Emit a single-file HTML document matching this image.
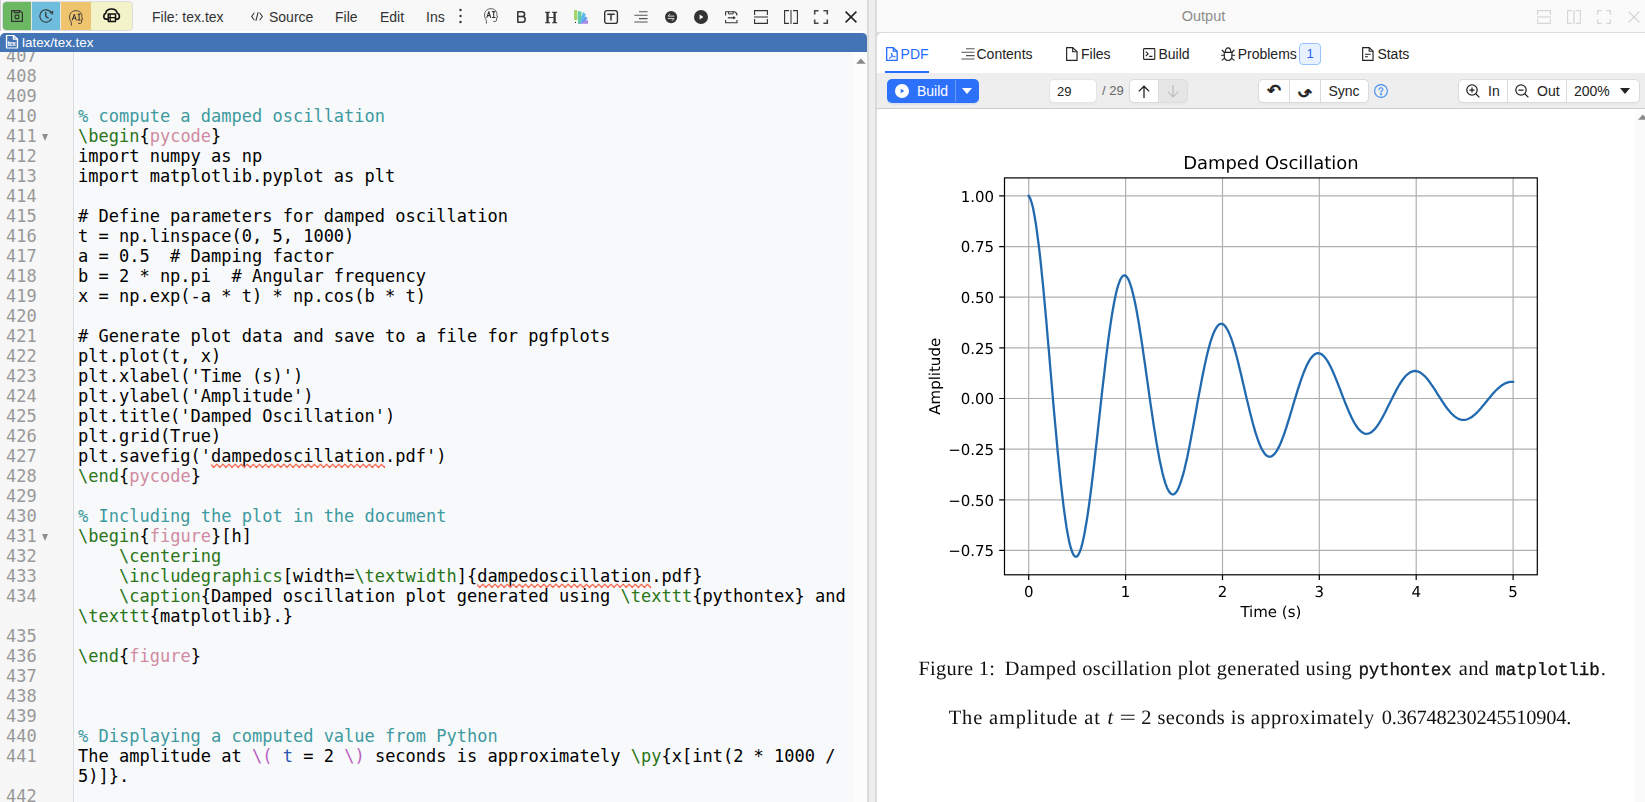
<!DOCTYPE html>
<html lang="en">
<head>
<meta charset="utf-8">
<title>tex.tex</title>
<style>
*{box-sizing:border-box}
html,body{margin:0;padding:0}
body{width:1645px;height:802px;overflow:hidden;background:#fff;position:relative;
  font-family:"Liberation Sans",Arial,sans-serif;font-size:14px;color:#333}
.abs{position:absolute}
svg{display:block;overflow:visible}
/* ---------- left pane ---------- */
#left{position:absolute;left:0;top:0;width:868px;height:802px;background:#fff;overflow:hidden}
#ltb{position:absolute;left:0;top:0;width:868px;height:31px;background:#f8f8f8}
#btns{position:absolute;left:3px;top:2px;box-shadow:0 0 0 1px #dcdce2;width:129px;height:28px;border-radius:3.5px;overflow:hidden;background:#e6e6e6}
#btns div{position:absolute;top:0;height:28px}
.tbt{position:absolute;top:0;height:33px;line-height:34px;font-size:14px;color:#333;white-space:nowrap}
.ico{position:absolute}
#titlebar{position:absolute;left:0;top:33px;width:867px;height:19px;background:#4274b6;border-top-left-radius:5px;border-top-right-radius:4.5px;color:#fff;font-size:13.4px;line-height:19px}
#ed{position:absolute;left:0;top:52px;width:868px;height:750px;background:#f8f9fa;overflow:hidden}
#ed:before{content:"";position:absolute;left:0;top:0;width:73px;height:750px;background:#f7f7f7;border-right:1px solid #ddd}
#ed:after{content:"";position:absolute;left:853px;top:0;width:15px;height:750px;background:#fcfcfc}
#lines{position:absolute;left:0;top:-6px;width:850px}
.ln{position:relative;min-height:20px}
.ln pre,.no{font-family:"DejaVu Sans Mono","Liberation Mono",monospace;font-size:17px;line-height:20px}
.ln pre{margin:0;padding:0 0 0 78px;color:#000;white-space:pre}
.no{position:absolute;left:6px;top:0;color:#999}
.fold{position:absolute;left:42px;top:7.5px;width:0;height:0;border-left:3.5px solid transparent;border-right:3.5px solid transparent;border-top:7px solid #8f8f8f}
.c{color:#3d9aa0}.t{color:#2a7519}.a{color:#d08ba2}.k{color:#bb5fc4}.v{color:#2a55b0}
.sp{position:relative}
.sp svg{position:absolute;left:0;top:16.6px;width:100%;height:6px;overflow:hidden}
/* ---------- divider ---------- */
#div{position:absolute;left:867px;top:0;width:10px;height:802px;background:linear-gradient(to right,rgba(220,220,220,0) 0,rgba(220,220,220,0) 0.5px,#dbdbdb 0.5px,#dbdbdb 1.7px,#eee 1.7px,#eee 8.2px,#dbdbdb 8.2px,#dbdbdb 9.8px,rgba(220,220,220,0) 9.8px)}
/* ---------- right pane ---------- */
#right{position:absolute;left:876px;top:0;width:769px;height:802px;background:#fff;overflow:hidden}
#rhead{position:absolute;left:0;top:0;width:769px;height:33px;background:#fafafa;border-bottom:1.5px solid #ddd}
#tabs{position:absolute;left:1px;top:33px;width:768px;height:40px;background:#fff;border-top-left-radius:5px}
.tab{position:absolute;top:0;height:40px;line-height:42px;font-size:14px;color:#222;white-space:nowrap}
#ptb{position:absolute;left:1px;top:73px;width:768px;height:36px;background:#eee;border-bottom:1px solid #ccc}
.btn{position:absolute;top:6px;height:24px;background:#fff;border:1px solid #dadada;box-shadow:0 2px 0 rgba(0,0,0,0.02);font-size:14px;line-height:22px;color:#222;white-space:nowrap}
#pdf{position:absolute;left:1px;top:109px;width:768px;height:693px;background:#fff}
</style>
</head>
<body>
<svg width="0" height="0" style="position:absolute"><defs><pattern id="zz" x="-0.3" y="0" width="6.1" height="6" patternUnits="userSpaceOnUse"><path d="M-3.05 4.5L0 1.1L3.05 4.5L6.1 1.1L9.15 4.5" stroke="#f5583c" stroke-width="1.25" stroke-opacity="0.92" fill="none" stroke-linejoin="round"/></pattern></defs></svg>
<div id="left">
<div id="ltb">
  <div class="abs" style="left:0;top:0;width:1px;height:31px;background:#cfcfcf"></div>
  <div id="btns">
    <div style="left:0;width:28px;background:#6bb762"></div>
    <div style="left:29px;width:28px;background:#6ebddd"></div>
    <div style="left:58px;width:30px;background:#f0c36d"></div>
    <div style="left:88px;width:41px;background:#f3f3c9"></div>
  </div>
  <!-- save -->
  <svg class="ico" style="left:11px;top:10px" width="12" height="12" viewBox="0 0 12 12" fill="none" stroke="#333" stroke-width="1.2" stroke-linejoin="round"><path d="M0.6 0.6H8.8L11.4 3V11.4H0.6Z"/><path d="M3.2 0.6V2.7H8.4V0.6"/><rect x="4.2" y="5.1" width="3.6" height="3.6" rx="0.6"/></svg>
  <!-- time travel -->
  <svg class="ico" style="left:39px;top:9px" width="14" height="14" viewBox="0 0 14 14" fill="none" stroke="#333" stroke-width="1.1" stroke-linecap="round" stroke-linejoin="round"><path d="M12.47 9.91A6.2 6.2 0 1 1 12.2 3.6"/><path d="M13.7 5.1L13.9 2.1L11 3.5Z" fill="#333" stroke-width="0.5"/><path d="M6.8 3.4V7.5L9.2 9" stroke-width="1.3"/></svg>
  <!-- AI head -->
  <svg class="ico" style="left:69px;top:10px" width="14" height="16" viewBox="0 0 14 16" fill="none" stroke="#333" stroke-width="0.9" stroke-linecap="round" stroke-linejoin="round"><path d="M2.4 15.2C2.6 13 2.3 12 1.4 10.6C-0.2 7.6 0.4 3.4 3.4 1.6C6.4 -0.1 10.6 0.6 12.2 3.4C13 4.8 13 6.2 12.8 7.2L13.6 9.4L12.6 9.8V12C12.6 13 12 13.4 11 13.4H9.6"/><path d="M3.4 10L5.3 4.2L7.2 10M4 8.2H6.6" stroke-width="1"/><path d="M9 4.2H11.2M10.1 4.2V10M9 10H11.2" stroke-width="1"/></svg>
  <!-- cloud table -->
  <svg class="ico" style="left:103px;top:7.6px" width="17.5" height="14.6" viewBox="0 0 17.5 14.6" fill="none" stroke="#111" stroke-width="1.6" stroke-linejoin="round"><path d="M4.9 11.1H3.1C1.5 11.1 0.8 9.7 0.8 8.2C0.8 6.8 1.5 5.7 2.7 5.4C3.1 2.7 5.6 1 8.6 1C11.6 1 13.8 2.7 14.2 5.2C15.5 5.5 16.4 6.7 16.4 8.2C16.4 9.7 15.6 11.1 14.1 11.1H12.7"/><rect x="5.3" y="5.9" width="7.2" height="7.5" stroke-width="1.5"/><path d="M5.3 9.6H12.5M7.2 5.9V13.4" stroke-width="1.2"/></svg>

  <div class="tbt" style="left:152px">File: tex.tex</div>
  <svg class="ico" style="left:251px;top:12px" width="12" height="9" viewBox="0 0 12 9" fill="none" stroke="#333" stroke-width="1.1" stroke-linecap="round" stroke-linejoin="round"><path d="M3 1.2L0.6 4.5L3 7.8M9 1.2L11.4 4.5L9 7.8M7 0.6L5 8.4"/></svg>
  <div class="tbt" style="left:269px">Source</div>
  <div class="tbt" style="left:335px">File</div>
  <div class="tbt" style="left:380px">Edit</div>
  <div class="tbt" style="left:426px;width:19px;overflow:hidden">Ins</div>
  <svg class="ico" style="left:459px;top:8px" width="3" height="16" viewBox="0 0 3 16" fill="#333"><circle cx="1.5" cy="2" r="1.2"/><circle cx="1.5" cy="8" r="1.2"/><circle cx="1.5" cy="14" r="1.2"/></svg>
  <!-- AI head 2 -->
  <svg class="ico" style="left:484px;top:8px" width="14" height="16" viewBox="0 0 14 16" fill="none" stroke="#333" stroke-width="0.8" stroke-linecap="round" stroke-linejoin="round"><path d="M2.4 15.2C2.6 13 2.3 12 1.4 10.6C-0.2 7.6 0.4 3.4 3.4 1.6C6.4 -0.1 10.6 0.6 12.2 3.4C13 4.8 13 6.2 12.8 7.2L13.6 9.4L12.6 9.8V12C12.6 13 12 13.4 11 13.4H9.6"/><path d="M2.9 9.4L4.8 3.6L6.7 9.4M3.5 7.6H6.1" stroke-width="1.05"/><path d="M8.3 3.6H11.1M9.7 3.6V9.4M8.3 9.4H11.1" stroke-width="1.05"/></svg>
  <!-- bold -->
  <svg class="ico" style="left:517px;top:11px" width="9" height="12" viewBox="0 0 9 12" fill="none" stroke="#333" stroke-width="1.5" stroke-linejoin="round"><path d="M0.8 0.8H4.8C6.6 0.8 7.6 1.8 7.6 3.2C7.6 4.6 6.6 5.6 4.8 5.6H0.8ZM0.8 5.6H5.2C7.2 5.6 8.2 6.8 8.2 8.4C8.2 10 7.2 11.2 5.2 11.2H0.8Z"/></svg>
  <!-- header H -->
  <div class="ico" style="left:543px;top:6.5px;width:16px;height:20px;font:17.6px/20px 'Liberation Serif',serif;color:#333;text-align:center;-webkit-text-stroke:0.45px #333;will-change:transform">H</div>
  <!-- colors fan -->
  <svg class="ico" style="left:574px;top:10px" width="14" height="14" viewBox="0 0 14 14"><path d="M4 10.15H14V13.8H4Z" fill="#a98ae8"/><path d="M11.4 6.2L13.7 8.6L7 13.6L4 13Z" fill="#6598ec"/><path d="M9.3 2L11.9 4.4L7 13.4L4 13Z" fill="#5dbbe9"/><path d="M3.9 1L7.7 1.8L6.4 13.2L3.6 13.4Z" fill="#62cba1"/><path d="M0 0H3.25V10.1H0Z" fill="#a5d46a"/><path d="M0 10.1H3.6V13.8H0Z" fill="#fdfdfd"/><circle cx="1.5" cy="12.4" r="0.55" fill="#222"/></svg>
  <!-- text box -->
  <svg class="ico" style="left:604px;top:10px" width="14" height="14" viewBox="0 0 14 14" fill="none" stroke="#333" stroke-width="1.2"><rect x="0.7" y="0.6" width="12.7" height="12.8" rx="2.2" stroke-width="1.4"/><path d="M3.3 4.3H10.7M7 4.3V10.4" stroke-width="1.5"/></svg>
  <!-- align -->
  <svg class="ico" style="left:634px;top:11px" width="14" height="12" viewBox="0 0 14 12" stroke="#555" stroke-width="1.1"><path d="M5 0.8H13.6M0.4 4.2H13.6M5 7.6H13.6M0.4 11H13.6"/></svg>
  <!-- swap circle -->
  <svg class="ico" style="left:665px;top:10.8px" width="12.2" height="12.2" viewBox="0 0 14 14"><circle cx="7" cy="7" r="7" fill="#333"/><path d="M10.8 5.9H3.6L6 3.3M3.2 8.7H10.4L8 11.3" fill="none" stroke="#e4e4e4" stroke-width="1.05" stroke-linejoin="round"/></svg>
  <!-- play circle -->
  <svg class="ico" style="left:694px;top:10px" width="14" height="14" viewBox="0 0 14 14"><circle cx="7" cy="7" r="7" fill="#333"/><path d="M5.6 4.6L9.4 7L5.6 9.4Z" fill="#fff"/></svg>
  <!-- save-arrow -->
  <svg class="ico" style="left:724.6px;top:10.6px" width="12.6" height="12.4" viewBox="0 0 12.6 12.4" fill="none" stroke="#333" stroke-width="1.1" stroke-linejoin="round"><path d="M0.6 4.4V0.7H9.2C10.8 1 11.9 2.4 12 4.4M0.6 9V11.7H12V9"/><path d="M3.6 0.7V2.9H8.2V0.7" stroke-width="1"/><path d="M2.8 6.8H9.4" stroke-width="1.2"/><path d="M8.2 5L10.8 6.8L8.2 8.6Z" fill="#333" stroke="none"/></svg>
  <!-- split horizontal -->
  <svg class="ico" style="left:754px;top:10px" width="14" height="14" viewBox="0 0 14 14" fill="none" stroke="#333" stroke-width="1.1"><path d="M0.6 5V0.6H13.4V5M0.6 9V13.4H13.4V9"/><path d="M0 7H14" stroke="#777" stroke-width="1.6"/></svg>
  <!-- split vertical -->
  <svg class="ico" style="left:784px;top:10px" width="14" height="14" viewBox="0 0 14 14" fill="none" stroke="#333" stroke-width="1.1"><path d="M5 0.6H0.6V13.4H5M9 0.6H13.4V13.4H9"/><path d="M7 0V14" stroke="#777" stroke-width="1.6"/></svg>
  <!-- fullscreen -->
  <svg class="ico" style="left:814px;top:10px" width="14" height="14" viewBox="0 0 14 14" fill="none" stroke="#484848" stroke-width="1.6"><path d="M0.7 4.6V0.7H4.6M9.4 0.7H13.3V4.6M13.3 9.4V13.3H9.4M4.6 13.3H0.7V9.4"/></svg>
  <!-- close -->
  <svg class="ico" style="left:845px;top:11px" width="12" height="12" viewBox="0 0 12 12" fill="none" stroke="#222" stroke-width="1.5"><path d="M0.6 0.6L11.4 11.4M11.4 0.6L0.6 11.4"/></svg>
</div>
<div id="titlebar">
  <svg class="ico" style="left:6px;top:2px" width="12" height="13.5" viewBox="0 0 11 14" preserveAspectRatio="none" fill="none" stroke="#fff" stroke-width="1.25" stroke-linejoin="round"><path d="M0.5 0.5H6.8L10.5 4.2V13.5H0.5Z"/><path d="M6.8 0.5V4.2H10.5"/></svg>
  <div class="abs" style="left:7.6px;top:7.4px;font:bold 6.5px/7px 'Liberation Sans',sans-serif;color:#fff;letter-spacing:-0.5px">tex</div>
  <div class="abs" style="left:22px;top:0">latex/tex.tex</div>
</div>
<div id="ed"><div id="lines">
<div class="ln"><span class="no">407</span><pre> </pre></div>
<div class="ln"><span class="no">408</span><pre> </pre></div>
<div class="ln"><span class="no">409</span><pre> </pre></div>
<div class="ln"><span class="no">410</span><pre><span class="c">% compute a damped oscillation</span></pre></div>
<div class="ln"><span class="no">411</span><i class="fold"></i><pre><span class="t">\begin</span>{<span class="a">pycode</span>}</pre></div>
<div class="ln"><span class="no">412</span><pre>import numpy as np</pre></div>
<div class="ln"><span class="no">413</span><pre>import matplotlib.pyplot as plt</pre></div>
<div class="ln"><span class="no">414</span><pre> </pre></div>
<div class="ln"><span class="no">415</span><pre># Define parameters for damped oscillation</pre></div>
<div class="ln"><span class="no">416</span><pre>t = np.linspace(0, 5, 1000)</pre></div>
<div class="ln"><span class="no">417</span><pre>a = 0.5  # Damping factor</pre></div>
<div class="ln"><span class="no">418</span><pre>b = 2 * np.pi  # Angular frequency</pre></div>
<div class="ln"><span class="no">419</span><pre>x = np.exp(-a * t) * np.cos(b * t)</pre></div>
<div class="ln"><span class="no">420</span><pre> </pre></div>
<div class="ln"><span class="no">421</span><pre># Generate plot data and save to a file for pgfplots</pre></div>
<div class="ln"><span class="no">422</span><pre>plt.plot(t, x)</pre></div>
<div class="ln"><span class="no">423</span><pre>plt.xlabel('Time (s)')</pre></div>
<div class="ln"><span class="no">424</span><pre>plt.ylabel('Amplitude')</pre></div>
<div class="ln"><span class="no">425</span><pre>plt.title('Damped Oscillation')</pre></div>
<div class="ln"><span class="no">426</span><pre>plt.grid(True)</pre></div>
<div class="ln"><span class="no">427</span><pre>plt.savefig('<span class="sp">dampedoscillation<svg><rect width="100%" height="6" fill="url(#zz)"/></svg></span>.pdf')</pre></div>
<div class="ln"><span class="no">428</span><pre><span class="t">\end</span>{<span class="a">pycode</span>}</pre></div>
<div class="ln"><span class="no">429</span><pre> </pre></div>
<div class="ln"><span class="no">430</span><pre><span class="c">% Including the plot in the document</span></pre></div>
<div class="ln"><span class="no">431</span><i class="fold"></i><pre><span class="t">\begin</span>{<span class="a">figure</span>}[h]</pre></div>
<div class="ln"><span class="no">432</span><pre>    <span class="t">\centering</span></pre></div>
<div class="ln"><span class="no">433</span><pre>    <span class="t">\includegraphics</span>[width=<span class="t">\textwidth</span>]{<span class="sp">dampedoscillation<svg><rect width="100%" height="6" fill="url(#zz)"/></svg></span>.pdf}</pre></div>
<div class="ln"><span class="no">434</span><pre>    <span class="t">\caption</span>{Damped oscillation plot generated using <span class="t">\texttt</span>{pythontex} and<br><span class="t">\texttt</span>{matplotlib}.}</pre></div>
<div class="ln"><span class="no">435</span><pre> </pre></div>
<div class="ln"><span class="no">436</span><pre><span class="t">\end</span>{<span class="a">figure</span>}</pre></div>
<div class="ln"><span class="no">437</span><pre> </pre></div>
<div class="ln"><span class="no">438</span><pre> </pre></div>
<div class="ln"><span class="no">439</span><pre> </pre></div>
<div class="ln"><span class="no">440</span><pre><span class="c">% Displaying a computed value from Python</span></pre></div>
<div class="ln"><span class="no">441</span><pre>The amplitude at <span class="k">\(</span> <span class="v">t</span> = 2 <span class="k">\)</span> seconds is approximately <span class="t">\py</span>{x[int(2 * 1000 /<br>5)]}.</pre></div>
<div class="ln"><span class="no">442</span><pre> </pre></div>
</div></div>
<svg class="abs" style="left:855.5px;top:58px" width="9.8" height="5.8" viewBox="0 0 10 6"><path d="M0 6L5 0.5L10 6Z" fill="#8a8a8a"/></svg>
</div><!-- /left -->
<div id="right">
<div id="rhead">
  <div class="abs" style="left:0;top:0;width:655px;text-align:center;font-size:14.5px;line-height:32px;color:#8c8c8c">Output</div>
  <!-- split horizontal -->
  <svg class="ico" style="left:661px;top:10px" width="14" height="14" viewBox="0 0 14 14" fill="none" stroke="#d6d6d6" stroke-width="1.1"><path d="M0.6 5V0.6H13.4V5M0.6 9V13.4H13.4V9"/><path d="M0 7H14" stroke="#dcdcdc" stroke-width="1.6"/></svg>
  <svg class="ico" style="left:691px;top:10px" width="14" height="14" viewBox="0 0 14 14" fill="none" stroke="#d6d6d6" stroke-width="1.1"><path d="M5 0.6H0.6V13.4H5M9 0.6H13.4V13.4H9"/><path d="M7 0V14" stroke="#dcdcdc" stroke-width="1.6"/></svg>
  <svg class="ico" style="left:721px;top:10px" width="14" height="14" viewBox="0 0 14 14" fill="none" stroke="#d6d6d6" stroke-width="1.3"><path d="M0.7 4.6V0.7H4.6M9.4 0.7H13.3V4.6M13.3 9.4V13.3H9.4M4.6 13.3H0.7V9.4"/></svg>
  <svg class="ico" style="left:751.5px;top:11px" width="12" height="12" viewBox="0 0 12 12" fill="none" stroke="#d2d2d2" stroke-width="1.3"><path d="M0.6 0.6L11.4 11.4M11.4 0.6L0.6 11.4"/></svg>
</div>
<div class="abs" style="left:1px;top:33px;width:6px;height:6px;background:#dedede"></div>
<div id="tabs">
  <!-- PDF -->
  <svg class="ico" style="left:8.8px;top:14px" width="11.8" height="14" viewBox="0 0 11 14" preserveAspectRatio="none" fill="none" stroke="#256cff" stroke-width="1.25" stroke-linejoin="round"><path d="M0.6 0.6H6.8L10.4 4.2V13.4H0.6Z"/><path d="M6.8 0.6V4.2H10.4"/><path d="M3 11.4C4.6 10.4 5.8 8.4 5.6 6.4C5.4 5.6 4.8 6 5 6.8C5.4 8.6 6.8 9.8 8.2 10C9 10 8.8 9.2 8 9.3C6.4 9.4 4.4 10.2 3 11.4Z" stroke-width="0.8"/></svg>
  <div class="tab" style="left:23.6px;color:#1f6bff">PDF</div>
  <div class="abs" style="left:8px;top:37.5px;width:44px;height:2.5px;background:#256cff"></div>
  <!-- Contents -->
  <svg class="ico" style="left:84px;top:15px" width="14" height="12" viewBox="0 0 14 12" stroke="#555" stroke-width="1.1"><path d="M5 0.8H13.6M0.4 4.2H13.6M5 7.6H13.6M0.4 11H13.6"/></svg>
  <div class="tab" style="left:99.5px">Contents</div>
  <!-- Files -->
  <svg class="ico" style="left:189.3px;top:14px" width="11.7" height="14" viewBox="0 0 11 14" preserveAspectRatio="none" fill="none" stroke="#222" stroke-width="1.1" stroke-linejoin="round"><path d="M0.6 0.6H6.3L10.4 4.7V13.4H0.6Z"/><path d="M6.3 0.6V4.7H10.4"/></svg>
  <div class="tab" style="left:204px">Files</div>
  <!-- Build -->
  <svg class="ico" style="left:266px;top:15px" width="13" height="12" viewBox="0 0 13 12" fill="none" stroke="#222" stroke-width="1.1" stroke-linejoin="round"><rect x="0.6" y="0.6" width="11.2" height="10.8" rx="0.6"/><path d="M2.8 3.6L5.2 5.8L2.8 8M6.2 8.4H9.4" stroke-width="1.1"/></svg>
  <div class="tab" style="left:281.4px">Build</div>
  <!-- Problems -->
  <svg class="ico" style="left:344px;top:13.9px" width="14.2" height="14.2" viewBox="0 0 14 14" fill="none" stroke="#222" stroke-width="1.15" stroke-linecap="round"><path d="M3.2 5.3H10.8V9C10.8 11.6 9.2 13.3 7 13.3C4.8 13.3 3.2 11.6 3.2 9Z"/><path d="M4.3 5.3C4.3 2.4 5.4 0.8 7 0.8C8.6 0.8 9.7 2.4 9.7 5.3"/><path d="M0.5 8.1H3.2M10.8 8.1H13.5M1.1 3.2L3.2 5.3M12.9 3.2L10.8 5.3M1.1 13L3.5 11M12.9 13L10.5 11"/></svg>
  <div class="tab" style="left:360.7px">Problems</div>
  <div class="abs" style="left:422px;top:9.5px;width:22px;height:22px;border:1px solid #9cc1fb;border-radius:4px;background:#e8f1ff;color:#2565ee;font-size:13px;line-height:20px;text-align:center">1</div>
  <!-- Stats -->
  <svg class="ico" style="left:485.3px;top:14px" width="11.7" height="14" viewBox="0 0 11 14" preserveAspectRatio="none" fill="none" stroke="#222" stroke-width="1.1" stroke-linejoin="round"><path d="M0.6 0.6H6.8L10.4 4.2V13.4H0.6Z"/><path d="M6.8 0.6V4.2H10.4"/><path d="M2.8 7.2H8.2M2.8 9.8H5.6" stroke-width="1"/></svg>
  <div class="tab" style="left:500.4px">Stats</div>
</div>
<div class="abs" style="left:0;top:73px;width:2px;height:36px;background:#eee;border-bottom:1px solid #ccc"></div>
<div id="ptb">
  <!-- Build button -->
  <div class="abs" style="left:10px;top:6px;width:92px;height:24px;border-radius:5px;background:#2d70f9;box-shadow:0 1.5px 0 rgba(5,95,255,0.10)"></div>
  <div class="abs" style="left:77.7px;top:7px;width:1px;height:22px;background:#6a9afb"></div>
  <svg class="ico" style="left:18px;top:11px" width="14" height="14" viewBox="0 0 14 14"><circle cx="7" cy="7" r="7" fill="#fff"/><path d="M5.7 4.7L9.3 7L5.7 9.3Z" fill="#2d70f9"/></svg>
  <div class="abs" style="left:40px;top:6px;line-height:24px;font-size:14px;color:#fff">Build</div>
  <svg class="ico" style="left:85px;top:14.6px" width="10" height="6" viewBox="0 0 10 6"><path d="M0 0H10L5 6Z" fill="#fff"/></svg>
  <!-- page -->
  <div class="btn" style="left:172px;width:47.5px;border-radius:5px;padding-left:7px;font-size:13px;line-height:23px;border-color:#e4e4e4">29</div>
  <div class="abs" style="left:225px;top:6px;line-height:24px;font-size:13px;color:#666">/ 29</div>
  <div class="btn" style="left:252px;width:29.5px;border-radius:5px 0 0 5px"></div>
  <div class="btn" style="left:281px;width:30px;border-radius:0 5px 5px 0;background:#e6e6e6;border-color:#dcdcdc"></div>
  <svg class="ico" style="left:260.5px;top:11.5px" width="12" height="13" viewBox="0 0 12 13" fill="none" stroke="#222" stroke-width="1.3"><path d="M6 13V1.2M0.8 6.4L6 1.2L11.2 6.4"/></svg>
  <svg class="ico" style="left:289.5px;top:11.5px" width="12" height="13" viewBox="0 0 12 13" fill="none" stroke="#bdbdbd" stroke-width="1.2"><path d="M6 0V11.8M0.8 6.6L6 11.8L11.2 6.6"/></svg>
  <!-- undo/redo/sync -->
  <div class="btn" style="left:380.5px;width:32px;border-radius:5px 0 0 5px"></div>
  <div class="btn" style="left:411.5px;width:32px;border-radius:0"></div>
  <div class="btn" style="left:442.5px;width:49px;border-radius:0 5px 5px 0;text-align:center">Sync</div>
  <div class="abs" style="left:387px;top:6.4px;width:20px;height:24px;font:bold 16.5px/24px 'DejaVu Sans',sans-serif;color:#222;text-align:center;-webkit-text-stroke:0.35px #222">↶</div>
  <div class="abs" style="left:417.5px;top:5.7px;width:20px;height:24px;font:bold 16.5px/24px 'DejaVu Sans',sans-serif;color:#222;text-align:center;-webkit-text-stroke:0.35px #222;transform:rotate(180deg)">↶</div>
  <svg class="ico" style="left:497px;top:11px" width="14" height="14" viewBox="0 0 14 14" fill="none" stroke="#3f8cf5" stroke-width="1.1" stroke-linecap="round"><circle cx="7" cy="7" r="6.4"/><path d="M5.1 5.6C5.1 4.4 6 3.7 7 3.7C8 3.7 8.9 4.4 8.9 5.4C8.9 6.6 7 6.8 7 8.3"/><circle cx="7" cy="10.3" r="0.5" fill="#3f8cf5"/></svg>
  <!-- zoom -->
  <div class="btn" style="left:580.5px;width:50.5px;border-radius:5px 0 0 5px"></div>
  <div class="btn" style="left:630px;width:60px;border-radius:0"></div>
  <div class="btn" style="left:689px;width:74px;border-radius:0 5px 5px 0"></div>
  <svg class="ico" style="left:589px;top:11px" width="14" height="14" viewBox="0 0 14 14" fill="none" stroke="#222" stroke-width="1.25"><circle cx="6" cy="6" r="5.2"/><path d="M9.8 9.8L13.4 13.4M3.4 6H8.6M6 3.4V8.6"/></svg>
  <div class="abs" style="left:611px;top:6px;line-height:24px;font-size:14px;color:#222">In</div>
  <svg class="ico" style="left:638px;top:11px" width="14" height="14" viewBox="0 0 14 14" fill="none" stroke="#222" stroke-width="1.25"><circle cx="6" cy="6" r="5.2"/><path d="M9.8 9.8L13.4 13.4M3.4 6H8.6"/></svg>
  <div class="abs" style="left:660px;top:6px;line-height:24px;font-size:14px;color:#222">Out</div>
  <div class="abs" style="left:697px;top:6px;line-height:24px;font-size:14px;color:#222">200%</div>
  <svg class="ico" style="left:743px;top:15px" width="10" height="6" viewBox="0 0 10 6"><path d="M0 0H10L5 6Z" fill="#222"/></svg>
</div>
<div id="pdf">
<svg class="abs" style="left:0;top:0;will-change:transform;text-rendering:geometricPrecision" width="768" height="693" viewBox="877 109 768 693" font-family="'DejaVu Sans',sans-serif" fill="#000">
<path d="M1028.7 177.9V574.8M1125.6 177.9V574.8M1222.5 177.9V574.8M1319.3 177.9V574.8M1416.2 177.9V574.8M1513.1 177.9V574.8M1004.5 195.9H1537.3M1004.5 246.6H1537.3M1004.5 297.2H1537.3M1004.5 347.9H1537.3M1004.5 398.5H1537.3M1004.5 449.2H1537.3M1004.5 499.8H1537.3M1004.5 550.4H1537.3" stroke="#b0b0b0" stroke-width="1.2" fill="none"/>
<path d="M1028.7 574.8v5.3M1125.6 574.8v5.3M1222.5 574.8v5.3M1319.3 574.8v5.3M1416.2 574.8v5.3M1513.1 574.8v5.3M1004.5 195.9h-5.3M1004.5 246.6h-5.3M1004.5 297.2h-5.3M1004.5 347.9h-5.3M1004.5 398.5h-5.3M1004.5 449.2h-5.3M1004.5 499.8h-5.3M1004.5 550.4h-5.3" stroke="#000" stroke-width="1.2" fill="none"/>
<polyline points="1028.7,195.9 1030.2,198.4 1031.6,202.5 1033.1,208.3 1034.5,215.8 1036.0,224.7 1037.4,235.1 1038.9,246.7 1040.4,259.5 1041.8,273.4 1043.3,288.2 1044.7,303.7 1046.2,319.9 1047.6,336.5 1049.1,353.4 1050.5,370.4 1052.0,387.5 1053.4,404.4 1054.9,421.0 1056.4,437.1 1057.8,452.7 1059.3,467.5 1060.7,481.6 1062.2,494.6 1063.6,506.6 1065.1,517.5 1066.5,527.2 1068.0,535.5 1069.4,542.6 1070.9,548.2 1072.4,552.5 1073.8,555.3 1075.3,556.6 1076.7,556.6 1078.2,555.1 1079.6,552.3 1081.1,548.1 1082.5,542.7 1084.0,536.1 1085.4,528.3 1086.9,519.5 1088.4,509.8 1089.8,499.2 1091.3,487.9 1092.7,476.0 1094.2,463.6 1095.6,450.7 1097.1,437.6 1098.5,424.4 1100.0,411.1 1101.4,397.9 1102.9,384.8 1104.4,372.2 1105.8,359.9 1107.3,348.2 1108.7,337.0 1110.2,326.6 1111.6,317.0 1113.1,308.3 1114.5,300.5 1116.0,293.6 1117.4,287.8 1118.9,283.1 1120.4,279.5 1121.8,277.0 1123.3,275.6 1124.7,275.3 1126.2,276.1 1127.6,278.0 1129.1,280.9 1130.5,284.9 1132.0,289.7 1133.4,295.5 1134.9,302.1 1136.4,309.5 1137.8,317.5 1139.3,326.2 1140.7,335.3 1142.2,344.9 1143.6,354.8 1145.1,365.0 1146.5,375.3 1148.0,385.6 1149.4,395.9 1150.9,406.1 1152.4,416.1 1153.8,425.8 1155.3,435.0 1156.7,443.8 1158.2,452.1 1159.6,459.8 1161.1,466.8 1162.5,473.1 1164.0,478.7 1165.4,483.4 1166.9,487.4 1168.4,490.4 1169.8,492.7 1171.3,494.0 1172.7,494.5 1174.2,494.1 1175.6,492.9 1177.1,490.9 1178.5,488.0 1180.0,484.4 1181.4,480.1 1182.9,475.2 1184.4,469.6 1185.8,463.5 1187.3,456.9 1188.7,449.9 1190.2,442.5 1191.6,434.9 1193.1,427.0 1194.5,419.0 1196.0,411.0 1197.4,402.9 1198.9,394.9 1200.4,387.1 1201.8,379.5 1203.3,372.2 1204.7,365.2 1206.2,358.6 1207.6,352.5 1209.1,346.9 1210.5,341.8 1212.0,337.3 1213.4,333.4 1214.9,330.2 1216.4,327.6 1217.8,325.6 1219.3,324.4 1220.7,323.8 1222.2,323.9 1223.6,324.6 1225.1,326.0 1226.5,328.1 1228.0,330.7 1229.4,333.9 1230.9,337.6 1232.4,341.8 1233.8,346.4 1235.3,351.4 1236.7,356.8 1238.2,362.5 1239.6,368.4 1241.1,374.5 1242.5,380.7 1244.0,386.9 1245.4,393.2 1246.9,399.4 1248.4,405.6 1249.8,411.5 1251.3,417.3 1252.7,422.8 1254.2,428.1 1255.6,432.9 1257.1,437.4 1258.5,441.5 1260.0,445.2 1261.4,448.3 1262.9,451.0 1264.4,453.2 1265.8,454.9 1267.3,456.0 1268.7,456.6 1270.2,456.7 1271.6,456.3 1273.1,455.3 1274.5,453.9 1276.0,452.0 1277.4,449.6 1278.9,446.9 1280.4,443.7 1281.8,440.2 1283.3,436.4 1284.7,432.3 1286.2,427.9 1287.6,423.4 1289.1,418.7 1290.5,413.9 1292.0,409.0 1293.4,404.1 1294.9,399.2 1296.4,394.4 1297.8,389.7 1299.3,385.2 1300.7,380.8 1302.2,376.7 1303.6,372.8 1305.1,369.2 1306.5,365.9 1308.0,363.0 1309.4,360.4 1310.9,358.2 1312.4,356.4 1313.8,355.0 1315.3,354.0 1316.7,353.4 1318.2,353.2 1319.6,353.4 1321.1,354.0 1322.5,355.0 1324.0,356.4 1325.4,358.1 1326.9,360.2 1328.4,362.5 1329.8,365.2 1331.3,368.1 1332.7,371.2 1334.2,374.6 1335.6,378.1 1337.1,381.7 1338.5,385.4 1340.0,389.2 1341.4,393.0 1342.9,396.8 1344.4,400.6 1345.8,404.3 1347.3,407.8 1348.7,411.3 1350.2,414.6 1351.6,417.6 1353.1,420.5 1354.5,423.1 1356.0,425.5 1357.4,427.6 1358.9,429.4 1360.4,430.9 1361.8,432.1 1363.3,433.0 1364.7,433.6 1366.2,433.8 1367.6,433.7 1369.1,433.3 1370.5,432.7 1372.0,431.7 1373.4,430.4 1374.9,428.9 1376.4,427.1 1377.8,425.1 1379.3,422.9 1380.7,420.5 1382.2,417.9 1383.6,415.3 1385.1,412.5 1386.5,409.6 1388.0,406.6 1389.4,403.7 1390.9,400.7 1392.4,397.8 1393.8,394.9 1395.3,392.1 1396.7,389.4 1398.2,386.8 1399.6,384.3 1401.1,382.0 1402.5,379.9 1404.0,378.0 1405.4,376.3 1406.9,374.8 1408.4,373.6 1409.8,372.6 1411.3,371.8 1412.7,371.3 1414.2,371.0 1415.6,371.0 1417.1,371.3 1418.5,371.7 1420.0,372.4 1421.4,373.4 1422.9,374.5 1424.4,375.8 1425.8,377.3 1427.3,379.0 1428.7,380.8 1430.2,382.8 1431.6,384.8 1433.1,387.0 1434.5,389.2 1436.0,391.5 1437.4,393.8 1438.9,396.1 1440.4,398.4 1441.8,400.7 1443.3,402.9 1444.7,405.0 1446.2,407.1 1447.6,409.0 1449.1,410.8 1450.5,412.5 1452.0,414.0 1453.4,415.4 1454.9,416.6 1456.4,417.6 1457.8,418.5 1459.3,419.1 1460.7,419.6 1462.2,419.9 1463.6,419.9 1465.1,419.8 1466.5,419.5 1468.0,419.0 1469.4,418.3 1470.9,417.5 1472.4,416.5 1473.8,415.4 1475.3,414.1 1476.7,412.7 1478.2,411.2 1479.6,409.7 1481.1,408.0 1482.5,406.3 1484.0,404.5 1485.4,402.7 1486.9,400.9 1488.4,399.1 1489.8,397.4 1491.3,395.6 1492.7,393.9 1494.2,392.3 1495.6,390.8 1497.1,389.3 1498.5,388.0 1500.0,386.8 1501.4,385.6 1502.9,384.7 1504.4,383.8 1505.8,383.1 1507.3,382.6 1508.7,382.2 1510.2,381.9 1511.6,381.8 1513.1,381.9" fill="none" stroke="#226aaf" stroke-width="2.3" stroke-linejoin="round" stroke-linecap="square"/>
<rect x="1004.5" y="177.9" width="532.8" height="396.9" fill="none" stroke="#000" stroke-width="1.2"/>
<g font-size="15.00" text-anchor="middle">
<text x="1028.7" y="596.7">0</text>
<text x="1125.6" y="596.7">1</text>
<text x="1222.5" y="596.7">2</text>
<text x="1319.3" y="596.7">3</text>
<text x="1416.2" y="596.7">4</text>
<text x="1513.1" y="596.7">5</text>
<text x="1270.9" y="616.6">Time (s)</text>
<text transform="translate(939.9 376.3) rotate(-90)">Amplitude</text>
</g>
<g font-size="15.00" text-anchor="end">
<text x="994.1" y="201.7">1.00</text>
<text x="994.1" y="252.3">0.75</text>
<text x="994.1" y="303.0">0.50</text>
<text x="994.1" y="353.6">0.25</text>
<text x="994.1" y="404.3">0.00</text>
<text x="994.1" y="454.9">−0.25</text>
<text x="994.1" y="505.5">−0.50</text>
<text x="994.1" y="556.2">−0.75</text>
</g>
<text x="1270.9" y="168.8" font-size="17.95" text-anchor="middle">Damped Oscillation</text>
<g font-family="'Liberation Serif',serif" font-size="20.4" fill="#111">
<text x="918.5" y="675.2" textLength="76.5" lengthAdjust="spacing">Figure 1:</text>
<text x="1004.8" y="675.2" textLength="346.8" lengthAdjust="spacing">Damped oscillation plot generated using</text>
<text x="1358.5" y="675.2" font-family="'Liberation Mono',monospace" font-size="17.6" textLength="93" lengthAdjust="spacing" stroke="#111" stroke-width="0.3">pythontex</text>
<text x="1458.8" y="675.2" textLength="30" lengthAdjust="spacing">and</text>
<text x="1495.3" y="675.2" font-family="'Liberation Mono',monospace" font-size="17.6" textLength="104.5" lengthAdjust="spacing" stroke="#111" stroke-width="0.3">matplotlib</text>
<text x="1600.8" y="675.2">.</text>
<text x="948.8" y="723.7" textLength="151" lengthAdjust="spacing">The amplitude at</text>
<text x="1107.5" y="723.7" font-style="italic">t</text>
<text x="1119.6" y="723.7" textLength="16.5" lengthAdjust="spacingAndGlyphs">=</text>
<text x="1141.2" y="723.7" textLength="233" lengthAdjust="spacing">2 seconds is approximately</text>
<text x="1381.8" y="723.7" textLength="189.5" lengthAdjust="spacing">0.36748230245510904.</text>
</g>
</svg>
<div class="abs" style="left:758px;top:1px;width:10px;height:692px;background:#fbfbfb"></div>
<svg class="abs" style="left:760.8px;top:5.2px" width="9.6" height="5.8" viewBox="0 0 10 6"><path d="M0 6L5 0.5L10 6Z" fill="#8a8a8a"/></svg>
</div>
</div><!-- /right -->
<div id="div"></div>
</body>
</html>
